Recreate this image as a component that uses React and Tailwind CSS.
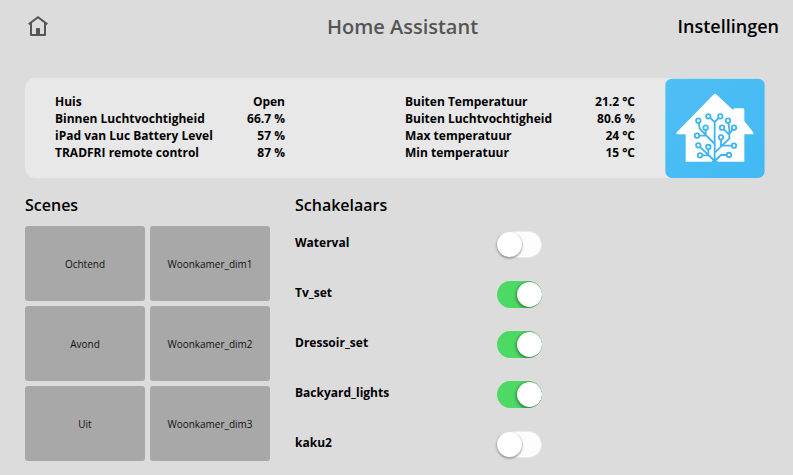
const leftSensors = [
  ["Huis", "Open"],
  ["Binnen Luchtvochtigheid", "66.7 %"],
  ["iPad van Luc Battery Level", "57 %"],
  ["TRADFRI remote control", "87 %"],
];

const rightSensors = [
  ["Buiten Temperatuur", "21.2 °C"],
  ["Buiten Luchtvochtigheid", "80.6 %"],
  ["Max temperatuur", "24 °C"],
  ["Min temperatuur", "15 °C"],
];

const scenes = ["Ochtend", "Woonkamer_dim1", "Avond", "Woonkamer_dim2", "Uit", "Woonkamer_dim3"];

const switches = [
  ["Waterval", false],
  ["Tv_set", true],
  ["Dressoir_set", true],
  ["Backyard_lights", true],
  ["kaku2", false],
];

// End points of the circuit tree inside the house
const nodes = [
  [115, 140], [145, 127], [181, 127], [204, 140],
  [137, 161], [111, 185], [186, 161], [222, 161],
  [183, 190], [115, 214], [145, 219], [222, 215],
  [120, 244], [207, 243],
];

function HomeIcon() {
  return (
    <svg className="block h-5 w-5" viewBox="0 0 20 20" fill="none" stroke="#555" strokeWidth="2">
      <path d="M0.6 8.2 L10 1.2 L19.4 8.2" />
      <path d="M3 6.8 V19 H17 V6.8" strokeLinejoin="round" />
      <path d="M8 12.5 Q8 12 8.5 12 H11.5 Q12 12 12 12.5 V19 H8 Z" fill="#555" stroke="none" />
    </svg>
  );
}

function Logo() {
  return (
    <svg className="block h-[100px] w-[100px] shrink-0" viewBox="15 12 300 300">
      <defs>
        <linearGradient id="sky" x1="0" y1="0" x2="1" y2="1">
          <stop offset="0" stopColor="#50bff5" />
          <stop offset="1" stopColor="#41b9f3" />
        </linearGradient>
      </defs>
      <rect x="16" y="14" width="298" height="298" rx="20" fill="url(#sky)" />
      <path
        d="M160 62 Q165 57 170 62 L220 109 V107 Q220 103 224 103 H249 Q253 103 253 107 V141 L279 174 Q284 181 276 181 H253 V263 H77 V181 H54 Q46 180 51 174 Z"
        fill="#fff"
      />
      <g fill="none" stroke="#41b5ee" strokeWidth="5.5" strokeLinejoin="round">
        <path d="M164 261 V144 L145 127 M164 144 L181 127" />
        <path d="M164 210 L119 164 L115 140 M137 161 V182 M111 185 H139" />
        <path d="M165 235 L208 194 V165 L204 140 M186 161 L207 181 L222 161 M183 190 V216 M186 215 H222" />
        <path d="M164 261 L115 214 M164 261 L183 243 H207 M145 219 V243 M120 244 H146" />
      </g>
      <path d="M154 264 L164 253 L174 264 Z" fill="#41b5ee" />
      <g fill="#fff" stroke="#41b5ee" strokeWidth="5.5">
        {nodes.map(([x, y]) => (
          <circle key={`${x}-${y}`} cx={x} cy={y} r="6.7" />
        ))}
      </g>
    </svg>
  );
}

function SensorList({ rows }) {
  return (
    <ul className="mt-[15px] w-[230px]">
      {rows.map(([name, value]) => (
        <li key={name} className="flex h-[17px] justify-between leading-[17px]">
          <span>{name}</span>
          <span>{value}</span>
        </li>
      ))}
    </ul>
  );
}

function Toggle({ on }) {
  return on ? (
    <span className="flex h-[27px] w-[45px] justify-end overflow-hidden rounded-full bg-[#4cd964] py-px">
      <span className="h-[25px] w-[25px] rounded-full bg-white shadow-[0_1px_3px_1px_rgba(0,0,0,0.4)]" />
    </span>
  ) : (
    <span className="flex h-[27px] w-[45px] rounded-full border border-l-0 border-[#e9e9e9] bg-[#fdfdfd]">
      <span className="h-[25px] w-[25px] rounded-full bg-white shadow-[0_1px_2px_0.5px_rgba(0,0,0,0.35)]" />
    </span>
  );
}

export default function App() {
  return (
    <main className="h-[475px] w-[793px] overflow-hidden bg-[#dcdcdc] font-['Open_Sans',sans-serif] text-black">
      <header className="grid h-[78px] grid-cols-[1fr_auto_1fr] items-start pr-[14px] pl-7">
        <div className="pt-4">
          <HomeIcon />
        </div>
        <h1 className="pt-3 pr-[2px] text-xl leading-[30px] font-semibold text-[#555]">Home Assistant</h1>
        <span className="pt-[11px] text-right text-lg leading-[30px] font-semibold">Instellingen</span>
      </header>

      <section className="ml-[25px] flex h-[100px] w-[740px] rounded-[10px] bg-[#e8e8e8] pl-[30px] text-xs font-bold">
        <SensorList rows={leftSensors} />
        <div className="ml-[120px]">
          <SensorList rows={rightSensors} />
        </div>
        <div className="ml-[30px]">
          <Logo />
        </div>
      </section>

      <div className="flex pl-[25px]">
        <section className="w-[245px]">
          <h2 className="mt-[15px] mb-[9px] text-base leading-6 font-semibold">Scenes</h2>
          <div className="grid grid-cols-2 gap-[5px]">
            {scenes.map((scene) => (
              <button key={scene} className="h-[75px] rounded-[3px] bg-[#a8a8a8] pt-[2px] text-[10px] text-[#111]">
                {scene}
              </button>
            ))}
          </div>
        </section>

        <section className="ml-[25px] w-[247px]">
          <h2 className="mt-[15px] text-base leading-6 font-semibold">Schakelaars</h2>
          <ul className="mt-[14px]">
            {switches.map(([name, on]) => (
              <li key={name} className="flex h-[50px] justify-between">
                <span className="pt-[3px] text-xs leading-[18px] font-bold">{name}</span>
                <Toggle on={on} />
              </li>
            ))}
          </ul>
        </section>
      </div>
    </main>
  );
}
